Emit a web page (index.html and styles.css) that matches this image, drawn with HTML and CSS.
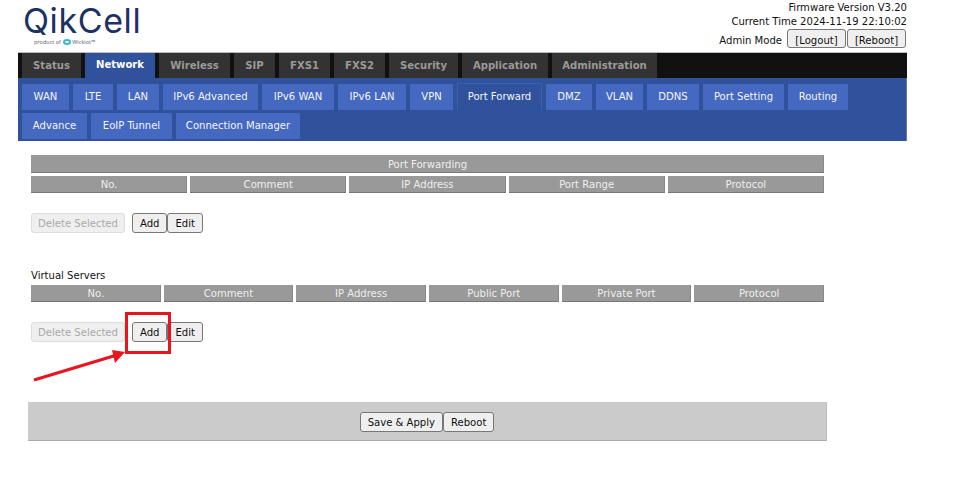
FILE: index.html
```html
<!DOCTYPE html>
<html lang="en">
<head>
<meta charset="utf-8">
<title>QikCell - Port Forward</title>
<link rel="stylesheet" href="styles.css">
</head>
<body>
<div class="page">
  <header class="top">
    <div class="logo">
      <div class="logo-name">QikCell</div>
      <div class="logo-sub">product of <span class="logo-mark"></span>Wickiot™</div>
    </div>
    <div class="info">
      <div class="info-line">Firmware Version V3.20</div>
      <div class="info-line">Current Time 2024-11-19 22:10:02</div>
      <div class="info-admin"><span class="admin-label">Admin Mode</span><button class="btn btn-top">[Logout]</button><button class="btn btn-top">[Reboot]</button></div>
    </div>
  </header>
  <nav class="tabs">
    <a class="tab t1">Status</a>
    <a class="tab t2 tab-on">Network</a>
    <a class="tab t3">Wireless</a>
    <a class="tab t4">SIP</a>
    <a class="tab t5">FXS1</a>
    <a class="tab t5">FXS2</a>
    <a class="tab t6">Security</a>
    <a class="tab t7">Application</a>
    <a class="tab t8">Administration</a>
  </nav>
  <nav class="sub">
    <a class="sb w47">WAN</a><a class="sb w40">LTE</a><a class="sb w42">LAN</a><a class="sb w95">IPv6 Advanced</a><a class="sb w72">IPv6 WAN</a><a class="sb w68">IPv6 LAN</a><a class="sb w43">VPN</a><a class="sb sb-on w85">Port Forward</a><a class="sb w46">DMZ</a><a class="sb w47">VLAN</a><a class="sb w52">DDNS</a><a class="sb w81">Port Setting</a><a class="sb w60">Routing</a><a class="sb w65">Advance</a><a class="sb w81">EoIP Tunnel</a><a class="sb w124">Connection Manager</a>
  </nav>
  <main class="main">
    <table class="grid">
      <tr><th colspan="5" class="grid-title">Port Forwarding</th></tr>
      <tr><th>No.</th><th>Comment</th><th>IP Address</th><th>Port Range</th><th>Protocol</th></tr>
    </table>
    <div class="actions">
      <button class="btn btn-off" disabled>Delete Selected</button><button class="btn">Add</button><button class="btn">Edit</button>
    </div>
    <h2 class="section">Virtual Servers</h2>
    <table class="grid">
      <tr><th>No.</th><th>Comment</th><th>IP Address</th><th>Public Port</th><th>Private Port</th><th>Protocol</th></tr>
    </table>
    <div class="actions">
      <button class="btn btn-off" disabled>Delete Selected</button><button class="btn">Add</button><button class="btn">Edit</button>
    </div>
    <div class="bar">
      <button class="btn">Save &amp; Apply</button><button class="btn">Reboot</button>
    </div>
  </main>
  <svg class="mark" width="180" height="90" viewBox="0 0 180 90" aria-hidden="true">
    <rect x="106.5" y="8.5" width="43" height="39" fill="none" stroke="#e8141e" stroke-width="3"/>
    <line x1="14" y1="75" x2="97" y2="50" stroke="#e8141e" stroke-width="3"/>
    <polygon points="105,47 92,45 95,58" fill="#e8141e"/>
  </svg>
</div>
</body>
</html>
```
FILE: styles.css
```css
* { box-sizing: border-box; }
html, body { margin: 0; padding: 0; background: #fff; }
body {
  font-family: "DejaVu Sans Condensed", "DejaVu Sans", sans-serif;
  font-size: 11.2px;
  color: #111;
}
.page { position: relative; width: 975px; height: 488px; overflow: hidden; padding-left: 18px; }
.top { width: 889px; height: 52px; display: flex; justify-content: space-between; }
.logo { padding: 4px 0 0 5px; color: #1b3263; }
.logo-name { font-family: Inter, sans-serif; font-weight: 400; font-size: 34px; line-height: 34px; letter-spacing: 0.6px; }
.logo-sub { font-family: "Open Sans", sans-serif; font-size: 5.5px; line-height: 7px; margin: 1px 0 0 11px; color: #556; }
.logo-mark { display: inline-block; width: 8px; height: 6px; border-radius: 50%; border: 2px solid #3fb6c8; margin: 0 1px; vertical-align: -1px; }
.info { text-align: right; padding-top: 1px; line-height: 14px; }
.info-admin { display: flex; justify-content: flex-end; align-items: center; height: 19px; padding-right: 1px; }
.admin-label { margin-right: 4px; padding-top: 4px; }
.btn {
  font: inherit; color: #111; height: 20px; padding: 0 7px;
  background: #efefef; border: 1px solid #777; border-radius: 3px; margin: 0; vertical-align: top;
}
.btn-top { width: 59px; height: 19px; padding: 4px 0 0; margin-left: 1px; overflow: hidden; }
.btn-off { color: #aaa; border-color: #ddd; margin-right: 7px; width: 94px; padding: 0; }
.tabs { width: 889px; height: 26px; background: #111; border-top: 1px solid #bbb; display: flex; padding-left: 4px; }
.tab { display: block; height: 25px; line-height: 25px; text-align: center; background: #333; color: #999; font-weight: 700; margin-right: 4px; }
.t1 { width: 59px; } .t2 { width: 70px; } .t3 { width: 71px; } .t4 { width: 41px; } .t5 { width: 51px; }
.t6 { width: 69px; } .t7 { width: 86px; } .t8 { width: 105px; }
.tab-on { background: #30529c; color: #fff; line-height: 23px; }
.sub { width: 889px; height: 63px; background: #30529c; padding: 6px 4px 0; display: flex; flex-wrap: wrap; align-content: flex-start; gap: 3px 4px; border-right: 1px solid #777; }
.sb { height: 26px; line-height: 26px; text-align: center; background: #4569c1; color: #f4f4f4; display: block; }
.w40 { width: 40px; } .w42 { width: 42px; } .w43 { width: 43px; } .w46 { width: 46px; } .w47 { width: 47px; }
.w52 { width: 52px; } .w60 { width: 60px; } .w65 { width: 65px; } .w68 { width: 68px; } .w72 { width: 72px; }
.w81 { width: 81px; } .w85 { width: 85px; } .w95 { width: 95px; } .w124 { width: 124px; }
.sb-on { background: #30529c; border: 1px solid #3b60b0; border-bottom: 0; height: 27px; margin-top: -1px; line-height: 25px; }
.main { width: 799px; margin-left: 10px; padding-top: 11px; }
.grid { width: 799px; table-layout: fixed; border-spacing: 3px; border-collapse: separate; }
.grid th { height: 17px; padding: 0; font-weight: 400; color: #eee; background: #999; box-shadow: inset 0 -1px #777, inset -1px 0 #888; line-height: 17px; }
.grid .grid-title { height: 18px; }
.actions { padding: 17px 0 0 3px; height: 57px; }
.section { font: inherit; margin: 16px 0 0 3px; line-height: 13px; height: 13px; }
.bar { margin-top: 40px; height: 39px; background: #cbcbcb; border-bottom: 1px solid #aaa; border-right: 1px solid #bbb; text-align: center; padding: 10px 0 0; }
.mark { position: absolute; left: 20px; top: 305px; }
```
